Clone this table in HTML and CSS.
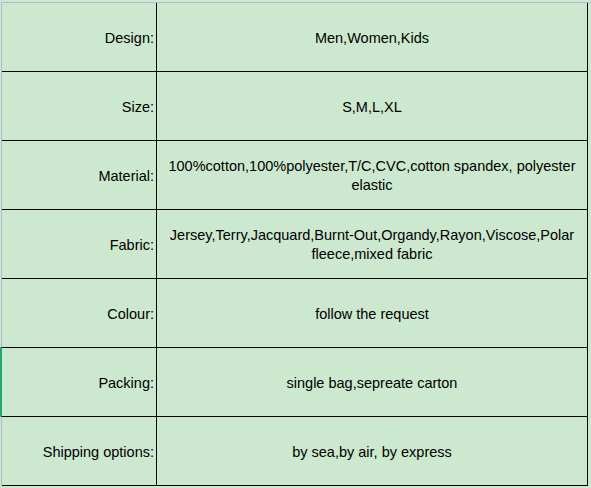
FILE: index.html
```html
<!DOCTYPE html>
<html>
<head>
<meta charset="utf-8">
<link rel="stylesheet" href="styles.css">
</head>
<body>
<div class="sheet">
  <div class="table">
    <div class="label">Design:</div><div class="value">Men,Women,Kids</div>
    <div class="label">Size:</div><div class="value">S,M,L,XL</div>
    <div class="label">Material:</div><div class="value">100%cotton,100%polyester,T/C,CVC,cotton spandex, polyester elastic</div>
    <div class="label">Fabric:</div><div class="value">Jersey,Terry,Jacquard,Burnt-Out,Organdy,Rayon,Viscose,Polar fleece,mixed fabric</div>
    <div class="label">Colour:</div><div class="value">follow the request</div>
    <div class="label selected">Packing:</div><div class="value">single bag,sepreate carton</div>
    <div class="label">Shipping options:</div><div class="value">by sea,by air, by express</div>
  </div>
</div>
</body>
</html>
```
FILE: styles.css
```css
html, body {
  margin: 0;
  padding: 0;
}
body {
  width: 591px;
  height: 488px;
  overflow: hidden;
  background: #cce8cf;
  font-family: "Liberation Sans", Arial, sans-serif;
  font-size: 14.5px;
  color: #000;
}
.sheet {
  margin-top: 2px;
  margin-left: 1px;
  border-top: 1px solid #b1b9d5;
  border-left: 1px solid #b1b9d5;
}
.table {
  display: grid;
  grid-template-columns: 155px 431px;
  width: 586px;
}
.label,
.value {
  box-sizing: border-box;
  height: 69px;
  padding-top: 2px;
  border-bottom: 1px solid #000;
  display: flex;
  align-items: center;
  line-height: 19px;
}
.label {
  justify-content: flex-end;
  text-align: right;
  padding-right: 2px;
  border-right: 1px solid #000;
  position: relative;
}
.value {
  justify-content: center;
  text-align: center;
  padding-left: 6px;
  padding-right: 6px;
  border-right: 1px solid #000;
}
.selected::before {
  content: "";
  position: absolute;
  left: -2px;
  top: -1px;
  width: 2px;
  height: 70px;
  background: #21a870;
}
```
